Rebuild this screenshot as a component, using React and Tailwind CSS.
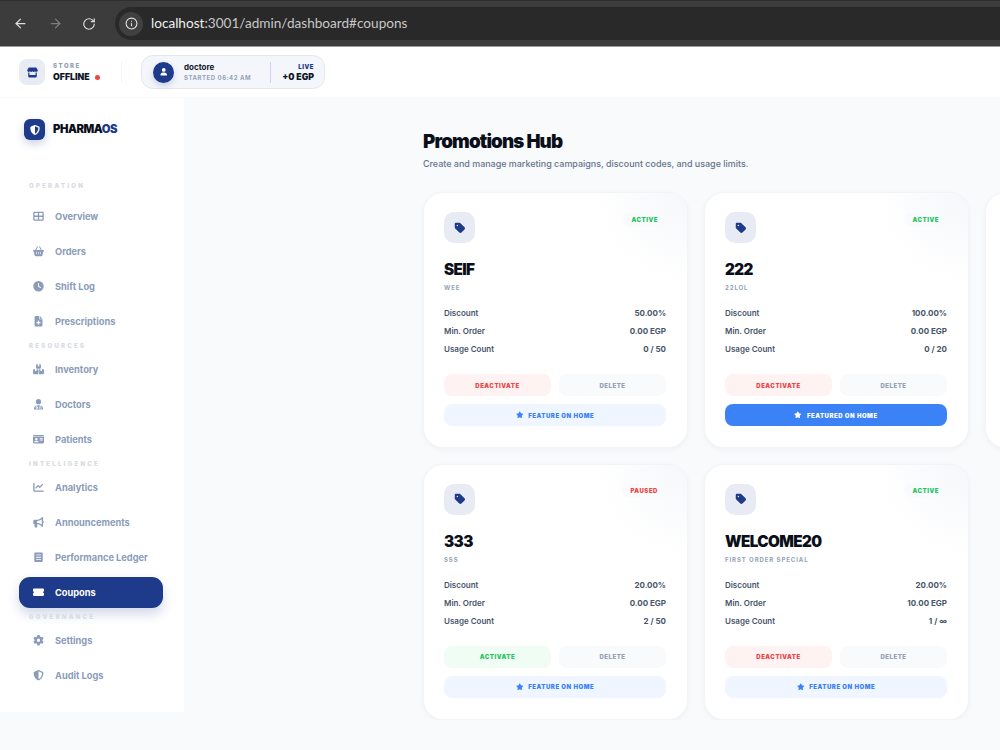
import React from "react";
import { ArrowLeft, ArrowRight, RotateCw, Info } from "lucide-react";
import {
  FaStore, FaUser, FaShieldHalved, FaTableCellsLarge, FaBasketShopping, FaClock, FaFileMedical,
  FaBoxesStacked, FaUserDoctor, FaIdCard, FaChartLine, FaBullhorn, FaTicketSimple, FaGear, FaTag, FaStar,
} from "react-icons/fa6";

function Ledger({ className }) {
  return (
    <svg viewBox="0 0 12 12" className={className} fill="currentColor">
      <path fillRule="evenodd" d="M2 0.5h8a0.8 0.8 0 0 1 .8.8v9.4a0.8 0.8 0 0 1-.8.8H2a0.8 0.8 0 0 1-.8-.8V1.300a0.8 0.8 0 0 1 .8-.8ZM3.200 2.800v1h5.600v-1ZM3.200 5.500v1h5.600v-1ZM3.200 8.200v1h5.600v-1Z" />
    </svg>
  );
}

const nav = [
  { label: "OPERATION", items: [["Overview", FaTableCellsLarge], ["Orders", FaBasketShopping], ["Shift Log", FaClock], ["Prescriptions", FaFileMedical]] },
  { label: "RESOURCES", items: [["Inventory", FaBoxesStacked], ["Doctors", FaUserDoctor], ["Patients", FaIdCard]] },
  { label: "INTELLIGENCE", items: [["Analytics", FaChartLine], ["Announcements", FaBullhorn], ["Performance Ledger", Ledger], ["Coupons", FaTicketSimple]] },
  { label: "GOVERNANCE", items: [["Settings", FaGear], ["Audit Logs", FaShieldHalved]] },
];

const coupons = [
  { code: "SEIF", desc: "WEE", status: "ACTIVE", discount: "50.00%", min: "0.00 EGP", usage: "0 / 50" },
  { code: "222", desc: "22LOL", status: "ACTIVE", discount: "100.00%", min: "0.00 EGP", usage: "0 / 20", featured: true },
  null,
  { code: "333", desc: "SSS", status: "PAUSED", discount: "20.00%", min: "0.00 EGP", usage: "2 / 50" },
  { code: "WELCOME20", desc: "FIRST ORDER SPECIAL", status: "ACTIVE", discount: "20.00%", min: "10.00 EGP", usage: "1 / ∞" },
];

const cardShell = "relative h-[255.75px] overflow-hidden rounded-[20px] border border-[#f1f5f9] bg-white shadow-[0_2px_6px_rgba(15,23,42,0.04)]";

function Row({ label, value }) {
  return (
    <div className="flex h-[18px] items-center justify-between text-[8px] font-semibold text-[#475569]">
      <span>{label}</span>
      <span className="font-bold">{value}</span>
    </div>
  );
}

function Card({ c }) {
  if (!c) return <div className={cardShell} />;
  const active = c.status === "ACTIVE";
  return (
    <div className={`${cardShell} pl-[20px] pr-[21px] pt-[19px]`}>
      <div className="absolute right-0 top-0 h-[90px] w-[90px] bg-[radial-gradient(circle_at_top_right,#f5f7fa,rgba(255,255,255,0)_70%)]" />
      <div className="relative flex items-start justify-between">
        <div className="flex h-[31px] w-[31px] items-center justify-center rounded-[10px] bg-[#e8ebf4] text-[#1e3a8a]">
          <FaTag className="h-[12px] w-[12px]" />
        </div>
        <span className={`mt-[0.5px] flex h-[13px] items-center rounded-full bg-[#f8fafc] px-[8px] text-[6px] font-black tracking-[0.09em] ${active ? "text-[#22c55e]" : "text-[#ef4444]"}`}>
          {c.status}
        </span>
      </div>
      <div className="relative mt-[17px] h-[20px] text-[15.25px] font-black leading-[20px] tracking-[-0.04em] text-[#0b0f19]">{c.code}</div>
      <div className="relative mt-[3px] h-[10px] text-[6px] font-bold leading-[10px] tracking-[0.155em] text-[#94a3b8]">{c.desc}</div>
      <div className="relative mt-[11px]">
        <Row label="Discount" value={c.discount} />
        <Row label="Min. Order" value={c.min} />
        <Row label="Usage Count" value={c.usage} />
      </div>
      <div className="relative mt-[16px] grid grid-cols-2 gap-[8px]">
        <button className={`h-[22px] rounded-[8px] text-[6px] font-black tracking-[0.09em] ${active ? "bg-[#fef2f2] text-[#ef4444]" : "bg-[#f0fdf4] text-[#22c55e]"}`}>
          {active ? "DEACTIVATE" : "ACTIVATE"}
        </button>
        <button className="h-[22px] rounded-[8px] bg-[#f8fafc] text-[6px] font-black tracking-[0.09em] text-[#94a3b8]">DELETE</button>
      </div>
      <button className={`relative mt-[8px] flex h-[22px] w-full items-center justify-center gap-[5px] rounded-[8px] text-[6px] font-black tracking-[0.09em] ${c.featured ? "bg-[#3b82f6] text-white" : "bg-[#eff6ff] text-[#3b82f6]"}`}>
        <FaStar className="h-[7.5px] w-[7.5px]" />
        {c.featured ? "FEATURED ON HOME" : "FEATURE ON HOME"}
      </button>
    </div>
  );
}

export default function App() {
  return (
    <div className="flex h-[750px] w-[1000px] flex-col overflow-hidden bg-[#f8fafc] font-['Inter',sans-serif]">
      {/* Browser chrome */}
      <div className="flex h-[47px] shrink-0 items-center border-b border-t border-b-[#9a9a9a] border-t-[#2e2e2e] bg-[#3c3c3c] pl-[13px]">
        <ArrowLeft className="h-[15px] w-[15px] text-[#dcdcdc]" strokeWidth={2} />
        <ArrowRight className="ml-[20px] h-[15px] w-[15px] text-[#7d7d7d]" strokeWidth={2} />
        <RotateCw className="ml-[19px] h-[14px] w-[14px] text-[#dcdcdc]" strokeWidth={2} />
        <div className="ml-[19px] flex h-[33px] flex-1 items-center rounded-l-full bg-[#292929] pl-[4px]">
          <div className="flex h-[24px] w-[24px] items-center justify-center rounded-full bg-[#404040]">
            <Info className="h-[13px] w-[13px] text-[#e3e3e3]" strokeWidth={2} />
          </div>
          <span className="ml-[8px] font-['Lato',sans-serif] text-[13.6px] text-[#c7c7c7]">
            <span className="text-[#eeeeee]">localhost</span>:3001/admin/dashboard#coupons
          </span>
        </div>
      </div>

      {/* Top bar */}
      <div className="flex h-[51px] shrink-0 items-center border-b border-[#f8fafc] bg-white pl-[19px]">
        <div className="flex h-[26px] w-[26px] items-center justify-center rounded-[8px] bg-[#e8ebf4] text-[#1e3a8a]">
          <FaStore className="h-[11px] w-[11px]" />
        </div>
        <div className="ml-[8px] w-[68px]">
          <div className="text-[6px] font-black leading-[9px] tracking-[0.25em] text-[#94a3b8]">STORE</div>
          <div className="mt-[1px] flex items-center gap-[5px] text-[8.75px] font-black leading-[12px] text-[#0f172a]">
            OFFLINE <span className="h-[5px] w-[5px] rounded-full bg-[#ef4444]" />
          </div>
        </div>
        <div className="h-[22px] w-px bg-[#f1f5f9]" />
        <div className="ml-[19px] flex h-[34px] w-[184px] items-center rounded-[12px] border border-[#e2e8f0] bg-[#f4f6fb] pl-[11px] pr-[10px]">
          <div className="flex h-[21px] w-[21px] items-center justify-center rounded-full bg-[#1e3a8a] text-white shadow-[0_3px_6px_rgba(30,58,138,0.2)]">
            <FaUser className="h-[7.5px] w-[7.5px]" />
          </div>
          <div className="ml-[10px] w-[85px]">
            <div className="text-[8px] font-bold leading-[11px] text-[#0f172a]">doctore</div>
            <div className="text-[6px] font-bold leading-[9px] tracking-[0.09em] text-[#94a3b8]">STARTED 06:42 AM</div>
          </div>
          <div className="ml-[1px] h-[21px] w-px bg-[#cbd5e1]" />
          <div className="flex-1 text-right">
            <div className="text-[6px] font-black leading-[9px] tracking-[0.09em] text-[#1e3a8a]">LIVE</div>
            <div className="text-[8.75px] font-black leading-[12px] text-[#0f172a]">+0 EGP</div>
          </div>
        </div>
      </div>

      <div className="flex min-h-0 flex-1 items-start">
        {/* Sidebar */}
        <aside className="h-[614px] w-[184px] shrink-0 bg-white pl-[19px] pr-[21px] pt-[21px]">
          <div className="ml-[5px] flex items-center gap-[8px]">
            <div className="flex h-[21px] w-[21px] items-center justify-center rounded-[6px] bg-[#1e3a8a] text-white shadow-[0_4px_8px_rgba(30,58,138,0.22)]">
              <FaShieldHalved className="h-[10px] w-[10px]" />
            </div>
            <div className="text-[11.25px] font-black tracking-[-0.04em] text-[#0b0f19]">
              PHARMA<span className="text-[#1e3a8a]">OS</span>
            </div>
          </div>
          <nav className="mt-[37px]">
            {nav.map((section, si) => (
              <div key={section.label}>
                <div className={`flex h-[17px] items-center pl-[10px] text-[6px] font-black tracking-[0.38em] text-[#d8dce3] ${si === 0 ? "mb-[7px]" : ""}`}>
                  {section.label}
                </div>
                <div className="flex flex-col gap-[4px]">
                  {section.items.map(([name, Icon]) => {
                    const on = name === "Coupons";
                    return (
                      <div
                        key={name}
                        className={`flex h-[31px] items-center rounded-[11px] pl-[14px] text-[9.25px] font-bold ${on ? "bg-[#1e3a8a] text-white shadow-[0_6px_12px_rgba(30,58,138,0.2)]" : "text-[#8a9cba]"}`}
                      >
                        <span className="flex w-[11px] justify-center"><Icon className="h-[10.5px] w-[11px]" /></span>
                        <span className="ml-[11px]">{name}</span>
                      </div>
                    );
                  })}
                </div>
              </div>
            ))}
          </nav>
        </aside>

        {/* Main */}
        <main className="min-w-0 flex-1 overflow-hidden pl-[239px] pt-[32px]">
          <h1 className="text-[18.75px] font-black leading-[24px] tracking-[-0.045em] text-[#0b0f19]">Promotions Hub</h1>
          <p className="mt-[3px] text-[8.95px] font-medium leading-[13px] text-[#64748b]">
            Create and manage marketing campaigns, discount codes, and usage limits.
          </p>
          <div className="mt-[22px] grid w-[827px] grid-cols-[265px_265px_265px] gap-x-[16px] gap-y-[16px]">
            {coupons.map((c, i) => (
              <Card key={i} c={c} />
            ))}
          </div>
        </main>
      </div>
    </div>
  );
}
